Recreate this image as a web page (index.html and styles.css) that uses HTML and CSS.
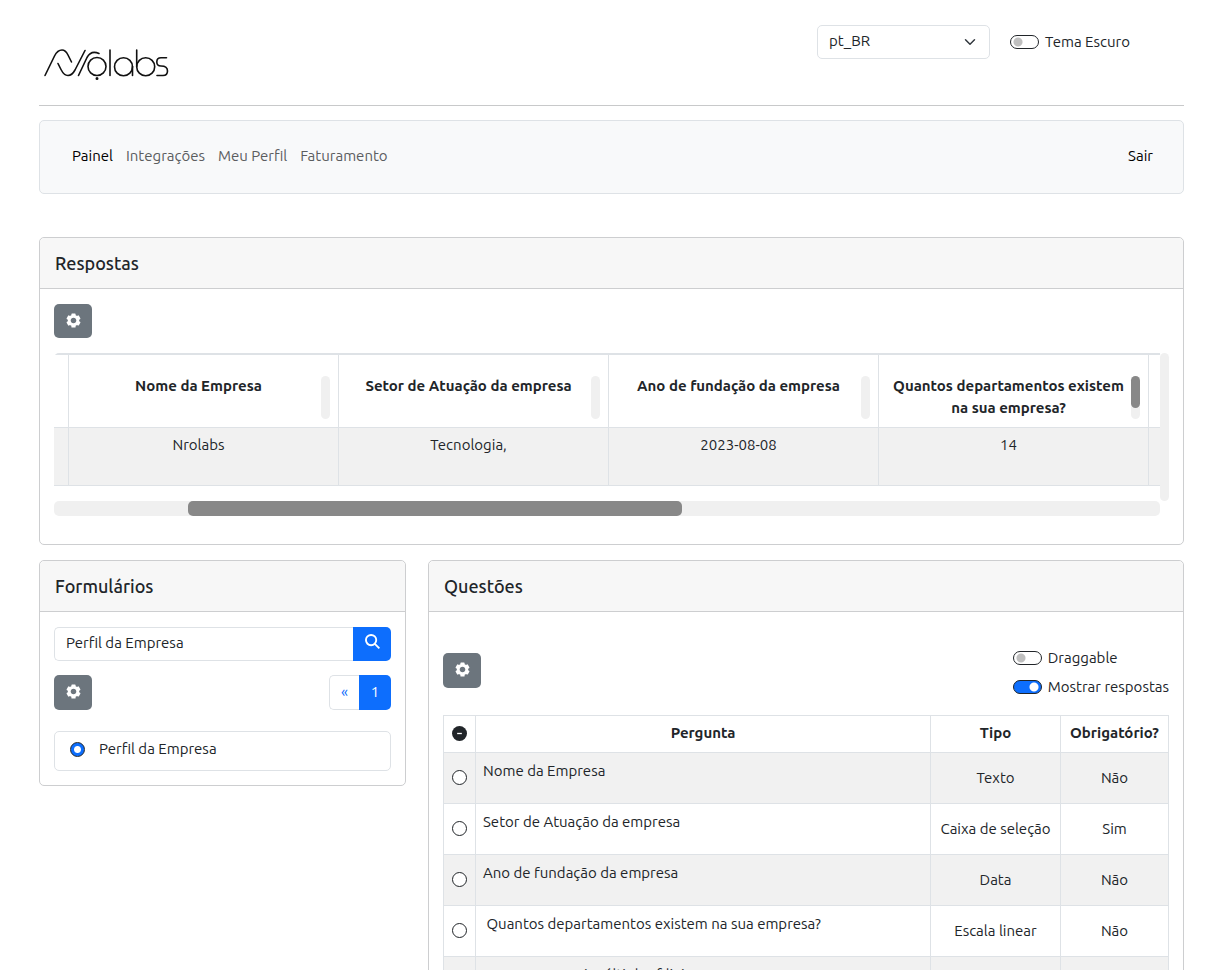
FILE: index.html
```html
<!DOCTYPE html>
<html lang="pt-BR">
<head>
<meta charset="utf-8">
<title>Nrolabs - Painel</title>
<link rel="stylesheet" href="styles.css">
</head>
<body>
<svg class="sprite" aria-hidden="true">
  <symbol id="gear" viewBox="0 0 24 24"><path d="m2.344 15.271 2 3.46a1 1 0 0 0 1.366.365l1.396-.806c.58.457 1.221.832 1.895 1.112V21a1 1 0 0 0 1 1h4a1 1 0 0 0 1-1v-1.598a8.094 8.094 0 0 0 1.895-1.112l1.396.806c.477.275 1.091.11 1.366-.365l2-3.460a1.004 1.004 0 0 0-.365-1.366l-1.372-.793a7.683 7.683 0 0 0-.002-2.224l1.372-.793c.476-.275.641-.89.365-1.366l-2-3.460a1 1 0 0 0-1.366-.365l-1.396.806A8.034 8.034 0 0 0 15 4.598V3a1 1 0 0 0-1-1h-4a1 1 0 0 0-1 1v1.598A8.094 8.094 0 0 0 7.105 5.710L5.710 4.904a.999.999 0 0 0-1.366.365l-2 3.460a1.004 1.004 0 0 0 .365 1.366l1.372.793a7.683 7.683 0 0 0 0 2.224l-1.372.793c-.476.275-.641.89-.365 1.366zM12 8c2.206 0 4 1.794 4 4s-1.794 4-4 4-4-1.794-4-4 1.794-4 4-4z"/></symbol>
</svg>
<div class="page">
  <header class="top">
    <a class="brand" href="#" aria-label="Nrolabs">
      <svg class="logo" viewBox="0 0 126 34" fill="none" stroke="#111" stroke-width="1.6" stroke-linecap="round">
        <path d="M1 28.500 10.500 9Q13.500 3 18 3Q21.500 3 24 8L27.500 15M14 16.500 17 22.500Q20 28.500 24 28.500Q28 28.500 31 23L41 3.500"/>
        <path d="M34.500 28.500 43 10.500Q47 3 55 6.500"/>
        <circle cx="53" cy="19.500" r="9"/><circle cx="53" cy="31.500" r=".7" fill="#111"/>
        <path d="M66 3V28.500M88.500 19.500V28.500M92.700 3V19.500M122.500 10.800H117Q112.800 10.800 112.800 15Q112.800 19 117 19Q123.500 19 123.500 24Q123.500 28.500 119 28.500H113"/>
        <circle cx="79.500" cy="19.700" r="9"/><circle cx="101.700" cy="19.700" r="9"/>
      </svg>
    </a>
    <div class="prefs">
      <select class="lang" aria-label="Idioma"><option>pt_BR</option></select>
      <label class="switch"><input type="checkbox" role="switch"><span>Tema Escuro</span></label>
    </div>
  </header>

  <nav class="menu">
    <div class="links">
      <a class="on" href="#">Painel</a><a href="#">Integrações</a><a href="#">Meu Perfil</a><a href="#">Faturamento</a>
    </div>
    <a class="on" href="#">Sair</a>
  </nav>

  <section class="card answers">
    <h2>Respostas</h2>
    <div class="body">
      <button class="gear" type="button" aria-label="Configurar respostas"><svg viewBox="0 0 24 24"><use href="#gear"/></svg></button>
      <div class="scroller">
        <div class="pane">
          <table class="wide">
            <colgroup><col class="edge"><col class="data"><col class="data"><col class="data"><col class="data"><col></colgroup>
            <thead><tr>
              <th></th>
              <th><div class="cell">Nome da Empresa<i class="bar"></i></div></th>
              <th><div class="cell">Setor de Atuação da empresa<i class="bar"></i></div></th>
              <th><div class="cell">Ano de fundação da empresa<i class="bar"></i></div></th>
              <th><div class="cell">Quantos departamentos existem<br>na sua empresa?<i class="bar active"></i></div></th>
              <th></th>
            </tr></thead>
            <tbody><tr><td></td><td>Nrolabs</td><td>Tecnologia,</td><td>2023-08-08</td><td>14</td><td></td></tr></tbody>
          </table>
          <div class="track"><div class="thumb"></div></div>
        </div>
        <div class="vtrack"></div>
      </div>
    </div>
  </section>

  <div class="row">
    <section class="card">
      <h2>Formulários</h2>
      <div class="body">
        <form class="search">
          <input type="text" value="Perfil da Empresa" aria-label="Buscar formulário">
          <button type="button" aria-label="Buscar"><svg viewBox="0 0 16 16" fill="none" stroke="currentColor" stroke-width="2"><circle cx="6.500" cy="6.500" r="5.500"/><path d="M10.500 10.500 15.300 15.300"/></svg></button>
        </form>
        <div class="tools">
          <button class="gear" type="button" aria-label="Configurar formulários"><svg viewBox="0 0 24 24"><use href="#gear"/></svg></button>
          <div class="pages"><button type="button" aria-label="Anterior">«</button><button class="now" type="button">1</button></div>
        </div>
        <label class="item"><input type="radio" name="form" checked><span>Perfil da Empresa</span></label>
      </div>
    </section>

    <section class="card">
      <h2>Questões</h2>
      <div class="body questions">
        <div class="tools">
          <button class="gear" type="button" aria-label="Configurar questões"><svg viewBox="0 0 24 24"><use href="#gear"/></svg></button>
          <div class="switches">
            <label class="switch"><input type="checkbox" role="switch"><span>Draggable</span></label>
            <label class="switch"><input type="checkbox" role="switch" checked><span>Mostrar respostas</span></label>
          </div>
        </div>
        <table class="list">
          <colgroup><col class="pick"><col><col class="type"><col class="need"></colgroup>
          <thead><tr><th><svg class="minus" viewBox="0 0 16 16"><circle cx="8" cy="8" r="8" fill="#212529"/><path d="M5.500 8h5" stroke="#fff" stroke-width="1.400"/></svg></th><th>Pergunta</th><th>Tipo</th><th>Obrigatório?</th></tr></thead>
          <tbody>
            <tr><td><input type="radio" name="q" aria-label="Nome da Empresa"></td><td>Nome da Empresa</td><td>Texto</td><td>Não</td></tr>
            <tr><td><input type="radio" name="q" aria-label="Setor de Atuação da empresa"></td><td>Setor de Atuação da empresa</td><td>Caixa de seleção</td><td>Sim</td></tr>
            <tr><td><input type="radio" name="q" aria-label="Ano de fundação da empresa"></td><td>Ano de fundação da empresa</td><td>Data</td><td>Não</td></tr>
            <tr><td><input type="radio" name="q" aria-label="Quantos departamentos"></td><td>&nbsp;Quantos departamentos existem na sua empresa?</td><td>Escala linear</td><td>Não</td></tr>
            <tr><td><input type="radio" name="q" aria-label="Filiais"></td><td>Empresa possui múltiplas filiais?</td><td></td><td></td></tr>
          </tbody>
        </table>
      </div>
    </section>
  </div>
</div>
</body>
</html>
```

FILE: styles.css
```css
* { box-sizing: border-box; }
html { scrollbar-width: none; }
body {
  margin: 0;
  background: #fff;
  color: #212529;
  font: 15px/22px Ubuntu, "Noto Sans", sans-serif;
}
button, input, select { font: inherit; color: inherit; margin: 0; }
a { color: inherit; text-decoration: none; }
.sprite { display: none; }
.page { padding: 0 31px 0 39px; }

.top {
  display: flex;
  justify-content: space-between;
  align-items: flex-start;
  height: 106px;
  padding: 25px 54px 0 5px;
  border-bottom: 1px solid #c8c9ca;
}
.brand { margin-top: 22px; }
.logo { display: block; width: 126px; height: 34px; }
.prefs { display: flex; align-items: center; gap: 20px; }
.lang {
  appearance: none;
  width: 173px;
  height: 34px;
  padding: 0 11px 2px;
  border: 1px solid #dee2e6;
  border-radius: 5px;
  background: #fff url("data:image/svg+xml,%3Csvg xmlns='http://www.w3.org/2000/svg' viewBox='0 0 16 16'%3E%3Cpath fill='none' stroke='%23343a40' stroke-linecap='round' stroke-linejoin='round' stroke-width='2' d='m2 5 6 6 6-6'/%3E%3C/svg%3E") no-repeat right 13px center / 12px;
}
.switch { display: flex; align-items: center; gap: 6px; }
.switch input {
  appearance: none;
  width: 29px;
  height: 14px;
  border: 1px solid #212529;
  border-radius: 7px;
  background: radial-gradient(circle at 7px 6px, #bfbfbf 4px, transparent 5px) #fff;
}
.switch input:checked {
  background: radial-gradient(circle at 20px 6px, #fff 4px, transparent 5px) #0d6efd;
}

.menu {
  display: flex;
  justify-content: space-between;
  align-items: center;
  height: 74px;
  margin: 14px 0 43px;
  padding: 0 30px 2px 32px;
  border: 1px solid #dee2e6;
  border-radius: 5px;
  background: #f8f9fa;
  color: #5b5d5f;
}
.links { display: flex; gap: 13px; }
.on { color: #000; }

.card { border: 1px solid #cdced0; border-radius: 5px; background: #fff; }
.card h2 {
  margin: 0;
  padding: 14px 15px;
  border-bottom: 1px solid #cdced0;
  border-radius: 5px 5px 0 0;
  background: #f7f7f7;
  font-size: 18px;
  font-weight: 500;
  line-height: 22px;
}
.body { padding: 15px 14px 14px; }
.answers .body { padding-bottom: 28px; }
.gear {
  display: flex;
  justify-content: center;
  width: 38px;
  height: 34px;
  padding: 8px 0 0;
  border: 0;
  border-radius: 5px;
  background: #6c757d;
  color: #fff;
}
.gear svg { width: 17px; height: 17px; fill: currentColor; }

.scroller { display: flex; align-items: flex-start; margin-top: 15px; }
.pane { flex: 1; min-width: 0; overflow: hidden; border-radius: 5px 0 0; }
.vtrack { width: 9px; height: 148px; border-radius: 5px; background: #f0f0f0; }
.track { height: 15px; margin-top: 15px; border-radius: 5px; background: #f0f0f0; }
.thumb { width: 494px; height: 15px; margin-left: 134px; border-radius: 5px; background: #888; }
table { width: 100%; border-collapse: collapse; table-layout: fixed; }
.edge { width: 14px; }
.data { width: 270px; }
.wide { border-top: 2px solid #dee2e6; }
.wide th, .wide td { padding: 0; border: 1px solid #dee2e6; border-width: 0 0 1px 1px; text-align: center; vertical-align: top; }
.wide th:first-child, .wide td:first-child { border-left: 0; }
.wide th { height: 73px; }
.wide td { height: 58px; padding-top: 6px; padding-right: 9px; background: #f1f1f1; }
.cell { position: relative; height: 43px; margin: 20px 8px 0 0; padding-right: 1px; }
.bar { position: absolute; top: 1px; right: 0; width: 9px; height: 43px; border-radius: 5px; background: #f0f0f0; }
.bar.active::before { content: ""; display: block; height: 32px; border-radius: 5px; background: #888; }

.row { display: grid; grid-template-columns: 1fr 2fr; align-items: start; margin: 15px -11px 0; }
.row .card { margin: 0 11px; }
.search { display: flex; }
.search input { flex: 1; min-width: 0; height: 34px; padding: 0 11px 2px; border: 1px solid #dee2e6; border-right: 0; border-radius: 5px 0 0 5px; }
.search button { width: 38px; padding: 0; border: 0; border-radius: 0 5px 5px 0; background: #0d6efd; color: #fff; }
.search svg { width: 15px; height: 15px; }
.tools { display: flex; justify-content: space-between; align-items: center; margin: 14px 0 21px; }
.tools .gear, .pages { height: 35px; }
.pages { display: flex; }
.pages button { width: 30px; padding: 0; border: 1px solid #dee2e6; border-right: 0; border-radius: 5px 0 0 5px; background: #fff; color: #0d6efd; }
.pages .now { width: 32px; border: 0; border-radius: 0 5px 5px 0; background: #0d6efd; color: #fff; }
.item { display: flex; align-items: center; gap: 14px; height: 40px; padding: 0 15px 3px; border: 1px solid #dee2e6; border-radius: 5px; }
input[type="radio"] { appearance: none; display: block; width: 15px; height: 15px; border: 1px solid #212529; border-radius: 50%; background: #fff; }
input[type="radio"]:checked { background: radial-gradient(circle, #fff 3px, #0d6efd 4px); }

.questions .tools { align-items: flex-start; margin: 20px 0 17px; }
.questions .gear { margin-top: 6px; }
.switches { display: grid; gap: 7px; }
.list .pick { width: 32px; }
.list .type { width: 130px; }
.list .need { width: 108px; }
.list th, .list td { padding: 0 7px; border: 1px solid #dee2e6; text-align: center; }
.list th { height: 37px; padding-bottom: 2px; }
.list td { height: 51px; }
.list th:first-child, .list td:first-child { padding: 0; }
.list td:nth-child(2) { padding-top: 7px; text-align: left; vertical-align: top; }
.list tbody tr:nth-child(odd) { background: #f1f1f1; }
.list input, .minus { display: block; margin: 0 auto; }
.minus { width: 15px; height: 15px; }
```
